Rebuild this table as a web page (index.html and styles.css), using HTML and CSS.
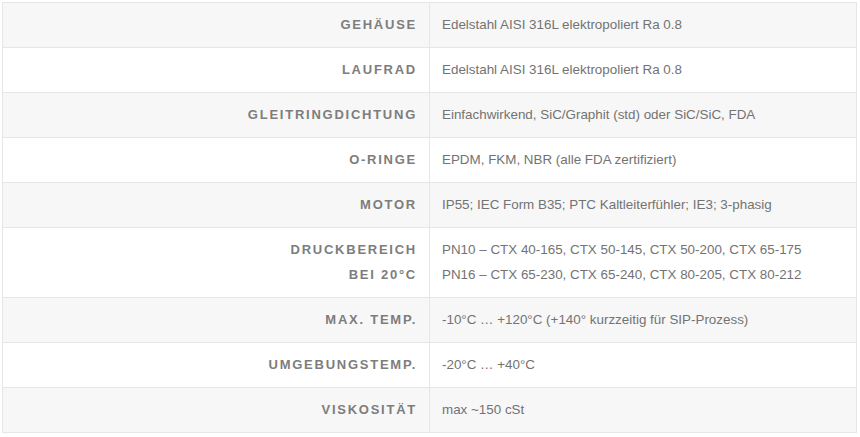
FILE: index.html
```html
<!DOCTYPE html>
<html lang="de">
<head>
<meta charset="utf-8">
<link rel="stylesheet" href="styles.css">
</head>
<body>
<table class="spec">
  <tbody>
    <tr><th>Gehäuse</th><td>Edelstahl AISI 316L elektropoliert Ra 0.8</td></tr>
    <tr><th>Laufrad</th><td>Edelstahl AISI 316L elektropoliert Ra 0.8</td></tr>
    <tr><th>Gleitringdichtung</th><td>Einfachwirkend, SiC/Graphit (std) oder SiC/SiC, FDA</td></tr>
    <tr><th>O-Ringe</th><td>EPDM, FKM, NBR (alle FDA zertifiziert)</td></tr>
    <tr><th>Motor</th><td>IP55; IEC Form B35; PTC Kaltleiterfühler; IE3; 3-phasig</td></tr>
    <tr><th>Druckbereich<br>bei 20°C</th><td>PN10 – CTX 40-165, CTX 50-145, CTX 50-200, CTX 65-175<br>PN16 – CTX 65-230, CTX 65-240, CTX 80-205, CTX 80-212</td></tr>
    <tr><th>Max. Temp.</th><td>-10°C … +120°C (+140° kurzzeitig für SIP-Prozess)</td></tr>
    <tr><th>Umgebungstemp.</th><td>-20°C … +40°C</td></tr>
    <tr><th>Viskosität</th><td>max ~150 cSt</td></tr>
  </tbody>
</table>
</body>
</html>
```

FILE: styles.css
```css
html, body {
  margin: 0;
  padding: 0;
  background: #ffffff;
}
body {
  padding: 2px 3px 0 2px;
  font-family: "Liberation Sans", Arial, sans-serif;
}
.spec {
  width: 855px;
  border-collapse: collapse;
  border: 1px solid #e6e6e6;
  font-size: 13px;
  line-height: 25px;
}
.spec tr:nth-child(odd) {
  background: #f7f7f7;
}
.spec tr:nth-child(even) {
  background: #ffffff;
}
.spec th, .spec td {
  border: 1px solid #e6e6e6;
  padding: 9px 13px 10px 13px;
  vertical-align: middle;
}
.spec th {
  width: 401px;
  text-align: right;
  text-transform: uppercase;
  font-weight: bold;
  letter-spacing: 1.75px;
  color: #7d7d7d;
  padding-right: 12px;
}
.spec td {
  text-align: left;
  color: #737373;
  padding-left: 12px;
  font-size: 13.4px;
}
```
